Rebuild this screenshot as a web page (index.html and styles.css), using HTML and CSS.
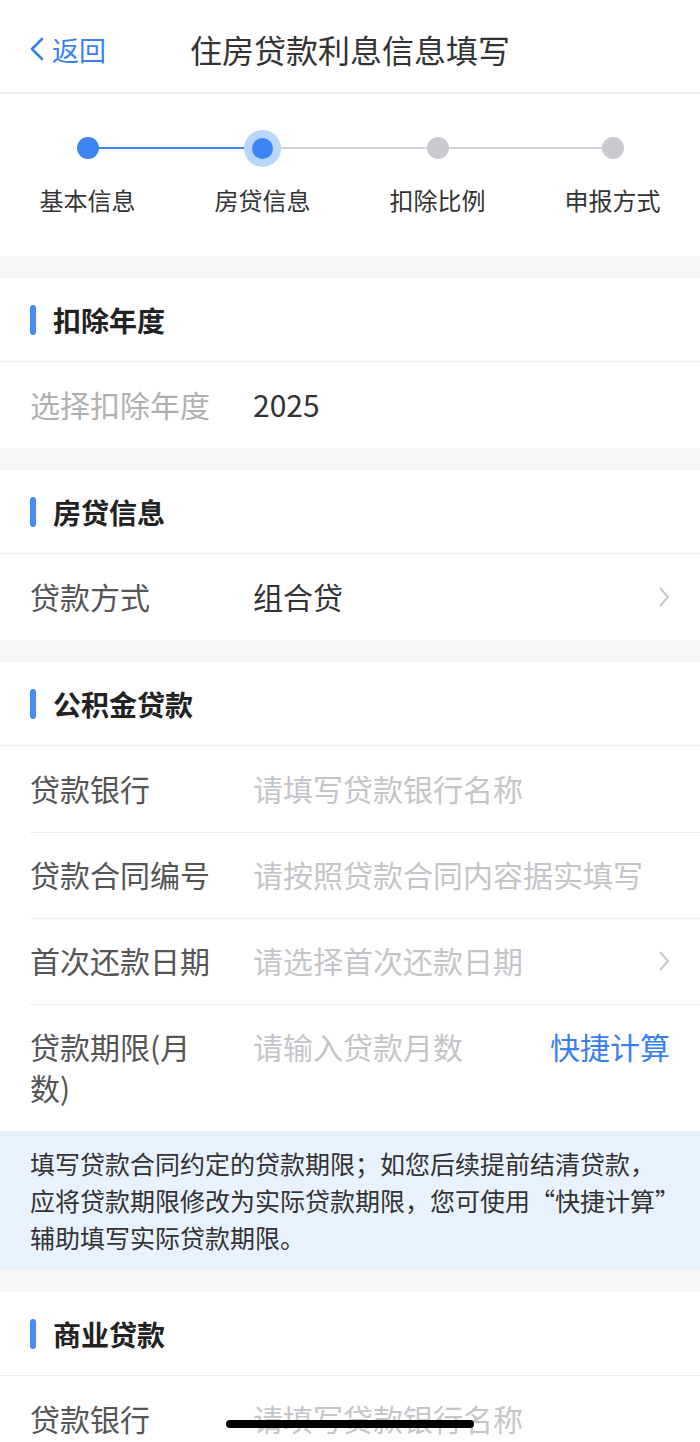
FILE: index.html
```html
<!DOCTYPE html>
<html lang="zh-CN">
<head>
  <meta charset="UTF-8" />
  <meta name="viewport" content="width=device-width, initial-scale=1" />
  <title>住房贷款利息信息填写</title>
  <link rel="stylesheet" href="styles.css">
</head>
<body>
  <header class="nav">
    <a class="nav-back" href="#">
      <svg width="17" height="24" viewBox="0 0 17 24"><path d="M14 2 L4 12 L14 22" fill="none" stroke="#3a7ff0" stroke-width="2.6" stroke-linecap="round" stroke-linejoin="round"/></svg>
      <span>返回</span>
    </a>
    <h1 class="nav-title">住房贷款利息信息填写</h1>
    <span></span>
  </header>

  <div class="steps">
    <div class="step done">
      <div class="step-head"><i class="line off"></i><span class="step-dot"></span><i class="line on"></i></div>
      <span class="step-name">基本信息</span>
    </div>
    <div class="step current">
      <div class="step-head"><i class="line on"></i><span class="step-dot"></span><i class="line"></i></div>
      <span class="step-name">房贷信息</span>
    </div>
    <div class="step">
      <div class="step-head"><i class="line"></i><span class="step-dot"></span><i class="line"></i></div>
      <span class="step-name">扣除比例</span>
    </div>
    <div class="step">
      <div class="step-head"><i class="line"></i><span class="step-dot"></span><i class="line off"></i></div>
      <span class="step-name">申报方式</span>
    </div>
  </div>

  <section class="card">
    <h2 class="card-title">扣除年度</h2>
    <div class="row">
      <span class="row-label muted">选择扣除年度</span>
      <span class="row-value">2025</span>
    </div>
  </section>

  <section class="card">
    <h2 class="card-title">房贷信息</h2>
    <div class="row">
      <span class="row-label">贷款方式</span>
      <span class="row-value">组合贷</span>
      <span class="row-arrow"><svg width="12" height="22" viewBox="0 0 12 22"><path d="M2 2 L10 11 L2 20" fill="none" stroke="#c7c7cc" stroke-width="2"/></svg></span>
    </div>
  </section>

  <section class="card">
    <h2 class="card-title">公积金贷款</h2>
    <div class="row">
      <span class="row-label">贷款银行</span>
      <span class="row-value placeholder">请填写贷款银行名称</span>
    </div>
    <div class="row">
      <span class="row-label">贷款合同编号</span>
      <span class="row-value placeholder">请按照贷款合同内容据实填写</span>
    </div>
    <div class="row">
      <span class="row-label">首次还款日期</span>
      <span class="row-value placeholder">请选择首次还款日期</span>
      <span class="row-arrow"><svg width="12" height="22" viewBox="0 0 12 22"><path d="M2 2 L10 11 L2 20" fill="none" stroke="#c7c7cc" stroke-width="2"/></svg></span>
    </div>
    <div class="row">
      <span class="row-label">贷款期限(月数)</span>
      <span class="row-value placeholder">请输入贷款月数</span>
      <a class="row-link" href="#">快捷计算</a>
    </div>
    <p class="tip">填写贷款合同约定的贷款期限；如您后续提前结清贷款，<br>应将贷款期限修改为实际贷款期限，您可使用“快捷计算”<br>辅助填写实际贷款期限。</p>
  </section>

  <section class="card">
    <h2 class="card-title">商业贷款</h2>
    <div class="row">
      <span class="row-label">贷款银行</span>
      <span class="row-value placeholder">请填写贷款银行名称</span>
    </div>
  </section>

  <div class="home-bar"></div>
</body>
</html>
```

FILE: styles.css
```css
:root {
  --blue: #3d84f5;
  --page-bg: #f5f6f8;
  --line: #ededed;
  --text: #333;
}
body {
  margin: 0;
  background: var(--page-bg);
  color: var(--text);
  font-family: "Noto Sans CJK SC", "Noto Sans", sans-serif;
}

/* 顶部导航 */
.nav {
  display: grid;
  grid-template-columns: 1fr auto 1fr;
  align-items: center;
  height: 94px;
  box-sizing: border-box;
  padding: 6px 28px 0;
  background: #fff;
  border-bottom: 2px solid #ececec;
}
.nav-back {
  display: flex;
  align-items: center;
  gap: 7px;
  color: #3a7ff0;
  font-size: 27px;
  text-decoration: none;
}
.nav-title {
  margin: 0;
  font-size: 32px;
  font-weight: 400;
  color: #333;
}

/* 步骤条 */
.steps {
  display: grid;
  grid-template-columns: repeat(4, 1fr);
  padding: 36px 0 40px;
  background: #fff;
}
.step {
  display: flex;
  flex-direction: column;
  align-items: center;
}
.step-head {
  display: flex;
  align-items: center;
  width: 100%;
  height: 36px;
}
.line {
  flex: 1;
  height: 2px;
  background: #d4d5d9;
}
.line.on {
  background: var(--blue);
}
.line.off {
  background: transparent;
}
.step-dot {
  width: 22px;
  height: 22px;
  border-radius: 50%;
  background: #c9cacf;
}
.step.done .step-dot {
  background: var(--blue);
}
.step.current .step-dot {
  width: 21px;
  height: 21px;
  background: var(--blue);
  box-shadow: 0 0 0 8px #b8d5fb;
}
.step-name {
  margin-top: 18px;
  font-size: 24px;
  line-height: 32px;
  color: #333;
}

/* 分组卡片 */
.card {
  margin-top: 22px;
  background: #fff;
}
.card-title {
  display: flex;
  align-items: center;
  gap: 17px;
  height: 83px;
  margin: 0;
  padding: 0 30px;
  border-bottom: 1px solid var(--line);
  font-size: 28px;
  font-weight: 700;
  color: #222;
}
.card-title::before {
  content: "";
  width: 6px;
  height: 30px;
  border-radius: 3px;
  background: #4a8af4;
}
.row {
  display: flex;
  align-items: flex-start;
  margin-left: 30px;
  padding: 22px 30px 23px 0;
  font-size: 30px;
  line-height: 41px;
}
.row + .row {
  padding-top: 21px;
  border-top: 1px solid var(--line);
}
.row-label {
  flex: 0 0 195px;
  margin-right: 28px;
  color: #555;
}
.row-label.muted {
  color: #b0b0b0;
}
.row-value {
  flex: 1;
  color: #333;
}
.row-value.placeholder {
  color: #c4c5c9;
}
.row-arrow {
  display: flex;
  align-items: center;
  height: 41px;
}
.row-link {
  color: #3a7ff0;
  text-decoration: none;
}

.tip {
  margin: 0;
  padding: 14px 20px 14px 30px;
  background: #e8f2fd;
  font-size: 25px;
  line-height: 37px;
  color: #333;
}

/* iOS 底部横条 */
.home-bar {
  position: fixed;
  left: 226px;
  right: 226px;
  bottom: 14px;
  height: 8px;
  border-radius: 4px;
  background: #000;
}
```
